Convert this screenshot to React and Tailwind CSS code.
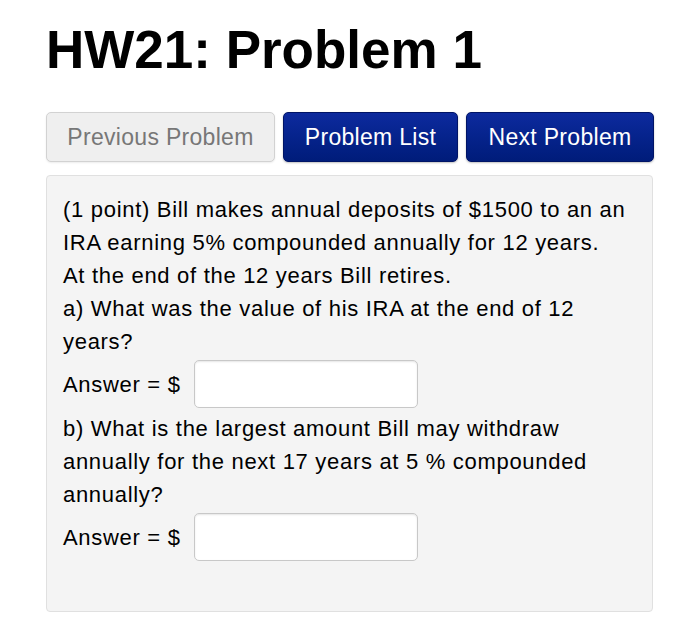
const font = { fontFamily: '"Liberation Sans", Arial, sans-serif' };

function NavButton({ children, disabled }) {
  return (
    <button
      type="button"
      className={
        disabled
          ? 'h-[50px] rounded-[5px] border border-[#d2d2d2] bg-[#efefef] text-[23px] tracking-[0.3px] text-[#777] shadow-[0_1px_2px_rgba(0,0,0,0.08)]'
          : 'h-[50px] rounded-[5px] border border-[#001466] bg-gradient-to-b from-[#0d2a9e] to-[#001c7a] text-[23px] tracking-[0.3px] text-white shadow-[0_1px_2px_rgba(0,0,0,0.25)]'
      }
    >
      {children}
    </button>
  );
}

function AnswerRow() {
  return (
    <div className="flex items-center gap-[13px] pb-[4px] pt-[2px]">
      <span>Answer = $</span>
      <input
        type="text"
        className="h-[48px] w-[224px] rounded-[5px] border border-[#c8c8c8] bg-white shadow-[inset_0_1px_2px_rgba(0,0,0,0.1)]"
      />
    </div>
  );
}

export default function App() {
  return (
    <div className="min-h-[626px] w-[700px] bg-white text-black" style={font}>
      <div className="px-[46px] pt-[20px]">
        <h1 className="text-[53px] font-bold leading-[60px]">HW21: Problem 1</h1>
        <div className="mt-[32px] grid grid-cols-[229px_175px_188px] gap-[8px]">
          <NavButton disabled>Previous Problem</NavButton>
          <NavButton>Problem List</NavButton>
          <NavButton>Next Problem</NavButton>
        </div>
        <div className="mt-[13px] h-[437px] w-[607px] rounded-[4px] border border-[#e0e0e0] bg-[#f4f4f4] px-[16px] pt-[17px] text-[22px] leading-[33px] tracking-[0.7px]">
          <p>
            (1 point) Bill makes annual deposits of $1500 to an an
            <br />
            IRA earning 5% compounded annually for 12 years.
            <br />
            At the end of the 12 years Bill retires.
          </p>
          <p>
            a) What was the value of his IRA at the end of 12
            <br />
            years?
          </p>
          <AnswerRow />
          <p>
            b) What is the largest amount Bill may withdraw
            <br />
            annually for the next 17 years at 5 % compounded
            <br />
            annually?
          </p>
          <AnswerRow />
        </div>
      </div>
    </div>
  );
}
